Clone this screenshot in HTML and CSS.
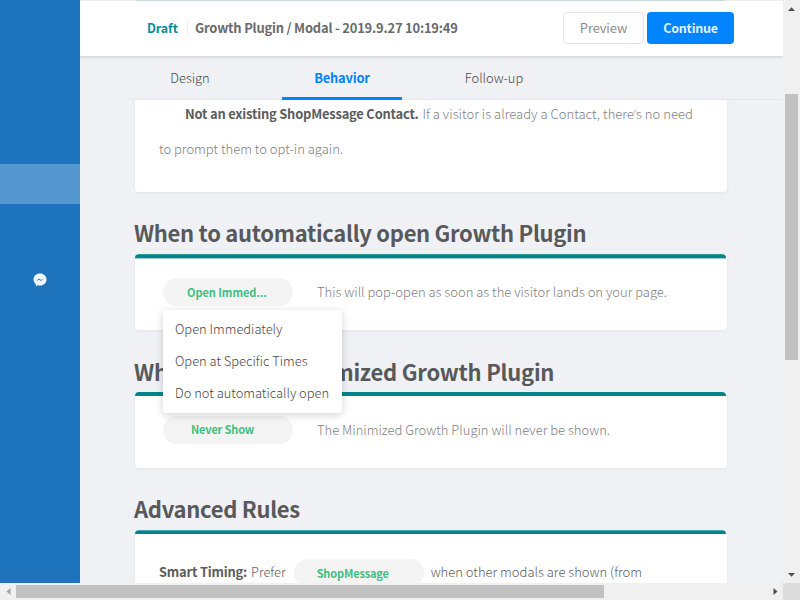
FILE: index.html
```html
<!DOCTYPE html>
<html lang="en">
<head>
<meta charset="utf-8">
<title>Growth Plugin</title>
<link rel="stylesheet" href="styles.css">
</head>
<body>
<div class="window">
  <aside class="sidebar">
    <div class="selected"></div>
    <svg class="messenger" width="14" height="14" viewBox="0 0 14 14"><path d="M7 .5C3.3.5.5 3.1.5 6.5c0 1.900.9 3.500 2.300 4.600V13.300l2.200-1.100c.6.2 1.300.3 2 .3 3.700 0 6.500-2.600 6.500-6S10.700.5 7 .5z" fill="#f3f8fc"/><path d="M3.300 8l2.800-2.400 1.700 1.500L10.700 5.600 7.900 8.100 6.200 6.700z" fill="#1e73bd"/></svg>
  </aside>
  <main class="main">
    <div class="peek"><span class="peek-bar"></span></div>
    <header class="header">
      <span class="status">Draft</span>
      <span class="divider"></span>
      <span class="title">Growth Plugin / Modal - 2019.9.27 10:19:49</span>
      <span class="btn preview">Preview</span>
      <span class="btn continue">Continue</span>
    </header>
    <nav class="tabs">
      <span class="tab">Design</span>
      <span class="tab active">Behavior</span>
      <span class="tab">Follow-up</span>
    </nav>
    <div class="content">
      <section class="card intro">
        <p><b>Not an existing ShopMessage Contact.</b> <span class="if">If a visitor is already a Contact, there<span class="apos">’</span>s no need</span></p>
        <p class="second">to prompt them to opt-in again.</p>
      </section>
      <h2>When to automatically open Growth Plugin</h2>
      <section class="card rule">
        <div class="bar soft"></div>
        <div class="row">
          <span class="pill">Open Immed...</span>
          <span class="desc">This will pop-open as soon as the visitor lands on your page.</span>
        </div>
        <div class="menu">
          <div class="item">Open Immediately</div>
          <div class="item">Open at Specific Times</div>
          <div class="item">Do not automatically open</div>
        </div>
      </section>
      <h2 class="minimized">When to show Minimized Growth Plugin</h2>
      <section class="card rule">
        <div class="bar"></div>
        <div class="row">
          <span class="pill never">Never Show</span>
          <span class="desc">The Minimized Growth Plugin will never be shown.</span>
        </div>
      </section>
      <h2 class="advanced">Advanced Rules</h2>
      <section class="card rule">
        <div class="bar late"></div>
        <div class="row timing">
          <b>Smart Timing:</b>
          <span class="prefer">Prefer</span>
          <span class="pill shop">ShopMessage</span>
          <span class="when">when other modals are shown (from</span>
        </div>
      </section>
    </div>
  </main>
  <div class="vscroll">
    <svg class="up" width="17" height="17" viewBox="0 0 17 17"><path d="M5 11h7L8.500 7.200z" fill="#505050"/></svg>
    <div class="vthumb"></div>
    <svg class="down" width="17" height="17" viewBox="0 0 17 17"><path d="M5 7h7L8.500 10.800z" fill="#505050"/></svg>
  </div>
  <div class="hscroll">
    <svg width="16" height="17" viewBox="0 0 16 17"><path d="M10.500 5v7L6.500 8.500z" fill="#a0a0a0"/></svg>
    <div class="hthumb"></div>
    <svg class="right" width="16" height="17" viewBox="0 0 16 17"><path d="M6.500 5v7L10.500 8.500z" fill="#505050"/></svg>
  </div>
  <div class="corner"></div>
</div>
</body>
</html>
```
FILE: styles.css
```css
* { box-sizing: border-box; }

body {
  margin: 0;
  overflow: hidden;
  font-family: "Noto Sans CJK SC", "Noto Sans", sans-serif;
  font-size: 12.9px;
  font-weight: 300;
  color: #484848;
}

p, h2 { margin: 0; }

b { font-weight: 700; color: #5c5c5c; font-size: 12.9px; letter-spacing: -0.19px; }

.window {
  display: grid;
  grid-template-columns: 80px 703px 17px;
  grid-template-rows: 583px 17px;
  width: 800px;
  height: 600px;
  background: #f0f1f5;
}

.sidebar { background: #1e73bd; padding-top: 164px; }
.selected { height: 40px; background: #5598cf; }
.messenger { display: block; margin: 69px 0 0 33px; }

.main {
  display: flex;
  flex-direction: column;
  min-width: 0;
  overflow: hidden;
}

.peek { flex: none; height: 1px; padding: 0 58px 0 56px; background: #f4f5f8; }
.peek-bar { display: block; height: 1px; background: #cbe4e8; }

.header {
  flex: none;
  position: relative;
  z-index: 1;
  display: flex;
  align-items: center;
  height: 55px;
  padding: 0 49px 1px 67px;
  background: #fff;
  box-shadow: 0 1px 3px rgba(0, 0, 0, 0.16);
  font-weight: 700;
  line-height: 20px;
  white-space: nowrap;
}

.status { width: 40px; color: #0b8c92; font-size: 12.5px; letter-spacing: -0.1px; }
.divider { width: 1px; height: 14px; background: #efefef; }
.title { margin: 0 auto 0 7px; color: #6a6a6a; letter-spacing: -0.18px; }

.btn {
  height: 32px;
  line-height: 32px;
  border-radius: 4px;
  text-align: center;
}

.preview {
  width: 81px;
  margin-right: 3px;
  line-height: 30px;
  border: 1px solid #e4e4e4;
  color: #8c8c8c;
  font-weight: 400;
  letter-spacing: -0.1px;
}

.continue { width: 87px; background: #0084ff; color: #e2f1ff; font-size: 12.5px; letter-spacing: -0.25px; }

.tabs {
  flex: none;
  display: flex;
  gap: 32px;
  height: 44px;
  margin-left: 50px;
  border-bottom: 1px solid #e6e7ea;
  position: relative;
  z-index: 1;
}

.tab { width: 120px; height: 44px; line-height: 44px; text-align: center; }
.tab.active { font-weight: 700; color: #0084ff; border-bottom: 3px solid #0084ff; letter-spacing: -0.2px; }

.content { flex: 1; min-height: 0; overflow: hidden; padding: 0 56px 0 55px; }

.card {
  width: 592px;
  background: #fff;
  border-radius: 4px;
  box-shadow: 0 1px 3px rgba(0, 0, 0, 0.06);
}

.intro { height: 96px; margin-top: -4px; padding: 0 24px; font-size: 13px; line-height: 36px; color: #808080; white-space: nowrap; }
.intro p { height: 36px; }
.intro p:first-child { padding-left: 26px; }
.intro .if { margin-left: 1px; letter-spacing: 0.04px; }
.intro .second { margin-top: -1px; }
.apos { font-family: "Open Sans", sans-serif; line-height: 1; }

h2 {
  padding: 24px 0 6px;
  margin-left: -1px;
  font-size: 22px;
  line-height: 32px;
  font-weight: 700;
  letter-spacing: -0.3px;
  color: #58595b;
}

.minimized { padding: 25px 0 5px; letter-spacing: -0.24px; }

.rule { position: relative; height: 76px; }
.bar { height: 4px; width: 591px; border-radius: 4px 4px 0 0; background: #00858b; }
.bar.soft { height: 5px; margin-bottom: -1px; background: linear-gradient(#30999e 1px, #00858b 1px, #00858b 4px, #9ed0d3 4px); }
.bar.late { background: linear-gradient(#4aa6aa 1px, #00858b 1px); }

.row { display: flex; align-items: center; height: 28px; margin: 20px 0 0 28px; line-height: 28px; white-space: nowrap; }

.pill {
  width: 130px;
  height: 28px;
  padding-left: 24px;
  border-radius: 14px;
  background: #f4f4f4;
  color: #3fbf7f;
  font-size: 11px;
  font-weight: 700;
  letter-spacing: -0.05px;
}

.never { padding-left: 28px; line-height: 27px; letter-spacing: -0.15px; }
.desc { margin: -1px 0 0 24px; font-size: 13px; line-height: 27px; color: #808080; }

.timing { margin: 25px 0 0 24px; }
.timing b, .timing .prefer, .timing .when { margin-top: -2px; }
.timing .prefer { margin-left: 4px; color: #606060; }
.timing .shop { margin-left: 8px; padding-left: 23px; letter-spacing: -0.15px; }
.timing .when { margin-left: 7px; font-size: 13px; color: #606060; }

.menu {
  position: absolute;
  z-index: 2;
  left: 28px;
  top: 56px;
  width: 179px;
  padding: 3px 12px 4px;
  border-radius: 3px;
  background: #fff;
  box-shadow: 0 2px 8px rgba(0, 0, 0, 0.18);
}

.item { height: 32px; line-height: 32px; white-space: nowrap; }

.vscroll { display: flex; flex-direction: column; background: #f0f0f0; }
.vthumb { width: 13px; height: 266px; margin: 77px 0 0 2px; background: #c1c1c1; }
.down { margin-top: auto; }

.hscroll { grid-column: 1 / 3; display: flex; background: #f0f0f0; }
.hthumb { width: 588px; height: 13px; margin-top: 2px; background: #c1c1c1; }
.right { margin-left: auto; }
.corner { background: #dcdcdc; }
```
